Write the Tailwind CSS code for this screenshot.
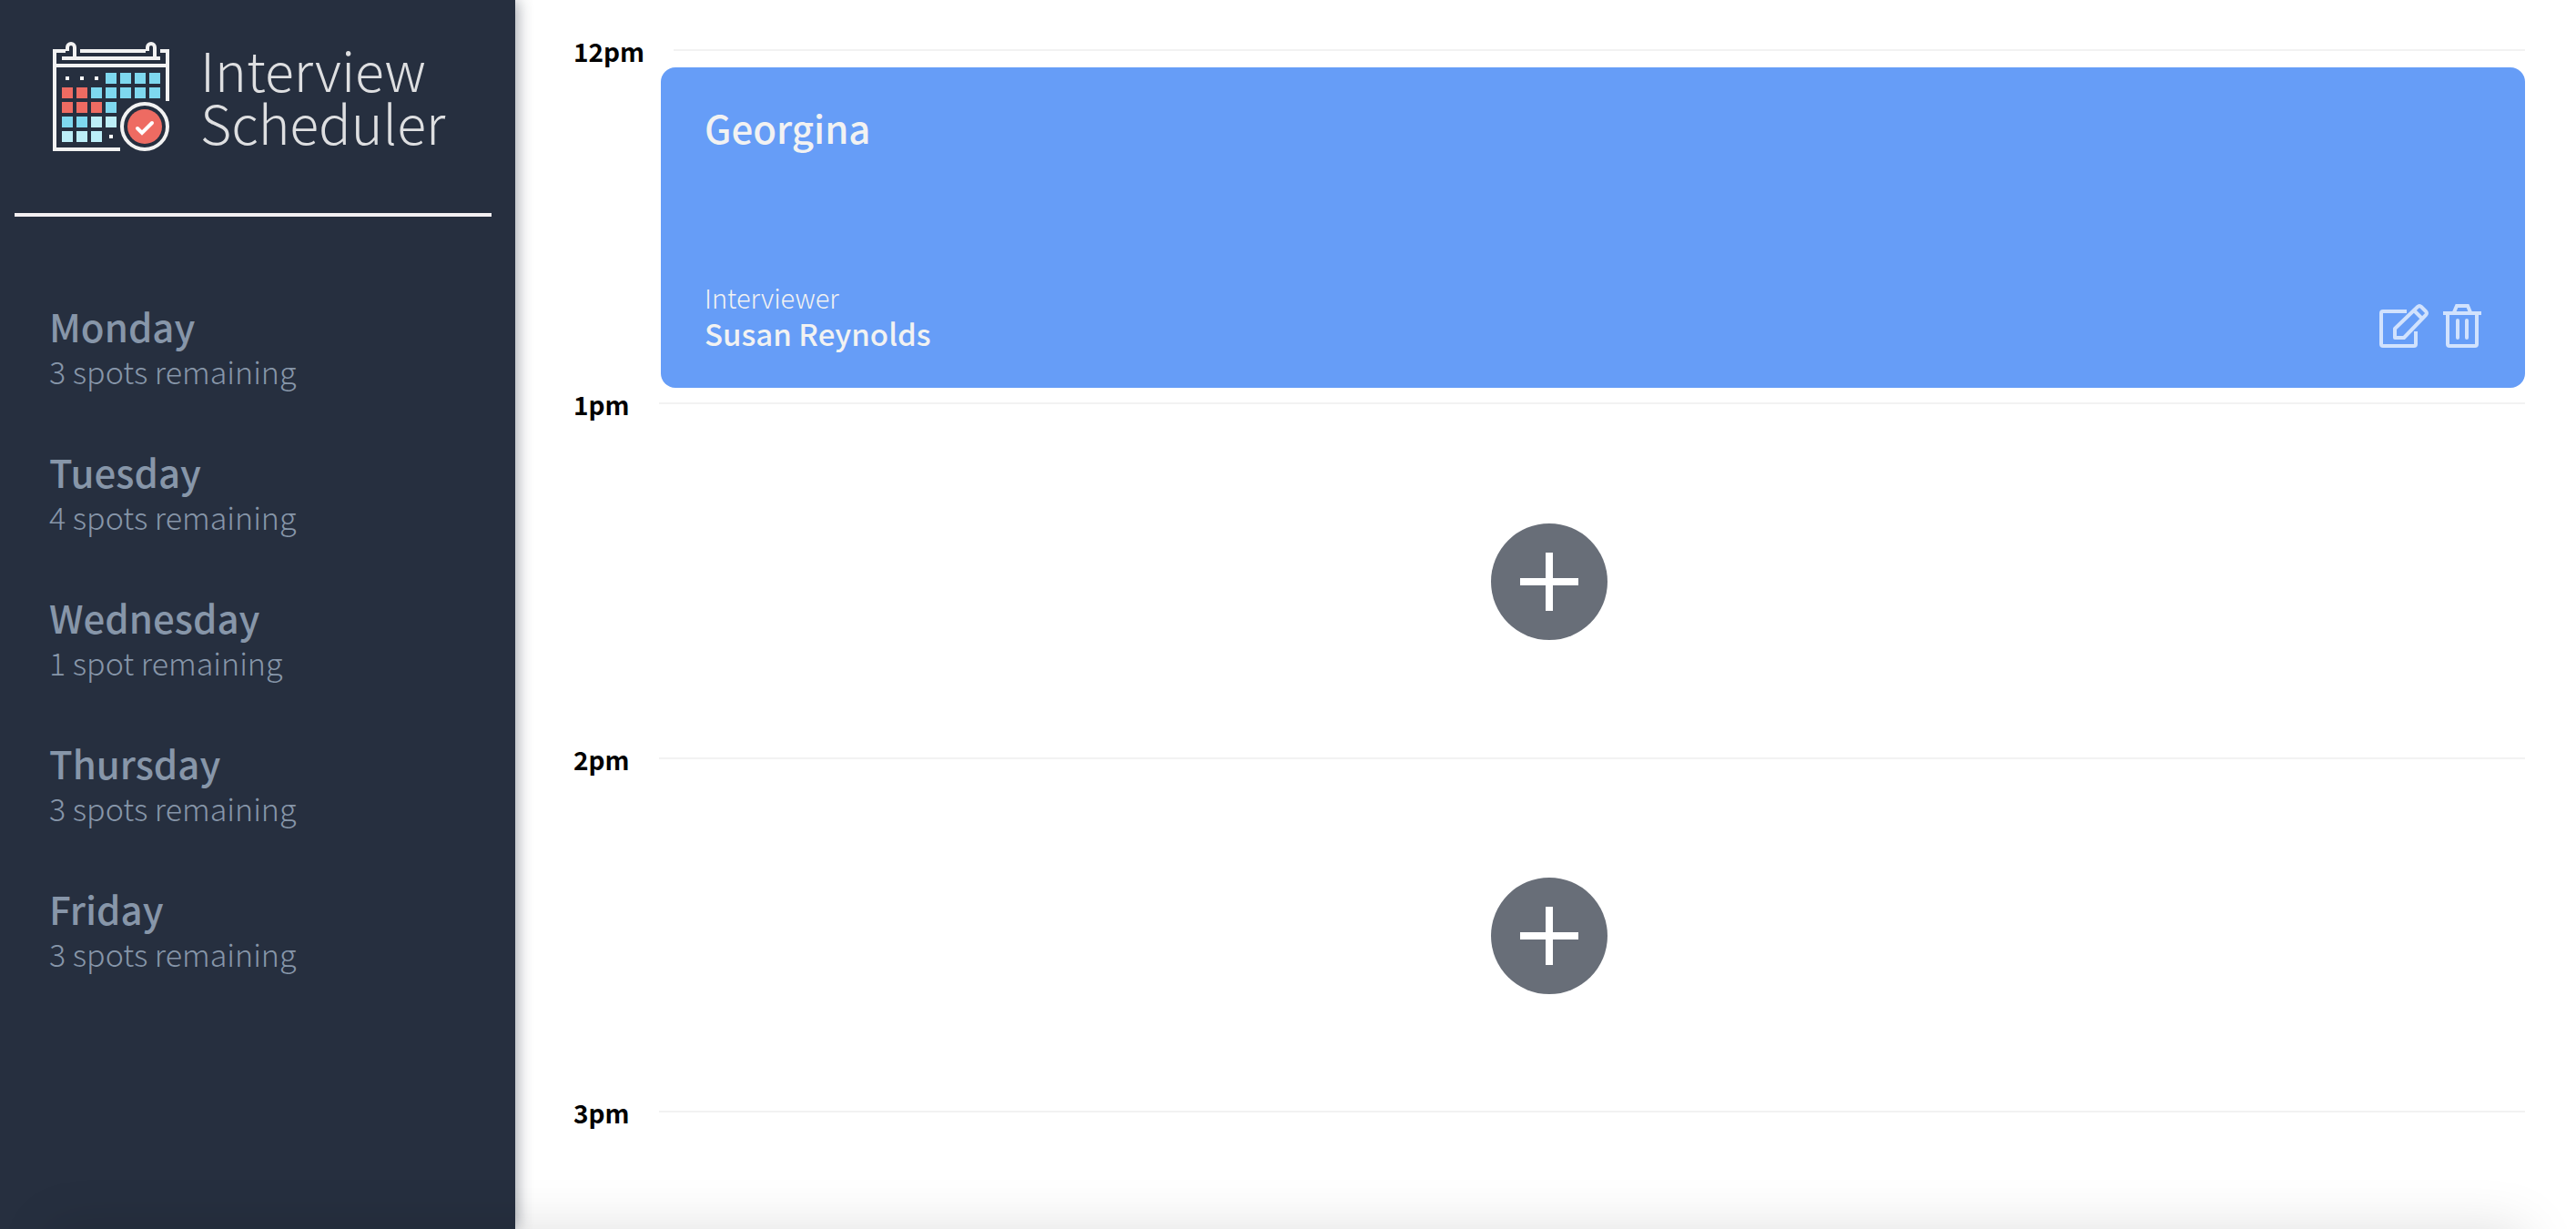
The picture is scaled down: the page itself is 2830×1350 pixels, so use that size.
<!DOCTYPE html>
<html lang="en">
<head>
<meta charset="utf-8">
<title>Interview Scheduler</title>
<script src="https://cdn.jsdelivr.net/npm/@tailwindcss/browser@4"></script>
</head>
<body class="bg-white font-['Noto_Sans_CJK_SC',sans-serif] overflow-hidden">
<div class="flex h-screen">
  <aside class="w-1/5 shrink-0 bg-[#262f3f] shadow-[2px_0_16px_rgba(38,47,63,0.45)]">
    <a href="#" class="flex items-center gap-[34px] pl-[58px] pt-[46px] text-[#dedfe1]">
      <svg class="h-[120px] w-[128px] shrink-0" viewBox="0 0 128 120" fill="none" aria-hidden="true">
        <g stroke="#f2f2f2" stroke-width="4">
          <path d="M14 10H2V118H74"/>
          <path d="M30 10H102M118 10H126V65"/>
          <path d="M10 18H118"/>
          <path d="M2 26H126"/>
          <path d="M16 10V6a4 4 0 0 1 8 0V18"/>
          <path d="M104 10V6a4 4 0 0 1 8 0V18"/>
          <circle cx="101" cy="93" r="25"/>
        </g>
        <g fill="#7ed8ef">
          <path d="M58 34h12v12h-12zM74 34h12v12h-12zM90 34h12v12h-12zM106 34h12v12h-12z"/>
          <path d="M42 50h12v12h-12zM58 50h12v12h-12zM74 50h12v12h-12zM90 50h12v12h-12zM106 50h12v12h-12z"/>
          <path d="M58 66h12v12h-12zM10 82h12v12h-12zM26 82h12v12h-12z"/>
        </g>
        <path fill="#bceef8" d="M42 82h12v12h-12zM58 82h12v12h-12zM10 98h12v12h-12zM26 98h12v12h-12zM42 98h12v12h-12z"/>
        <path fill="#ee6b62" d="M10 50h12v12h-12zM26 50h12v12h-12zM10 66h12v12h-12zM26 66h12v12h-12zM42 66h12v12h-12z"/>
        <path fill="#fff" d="M14 38h4v4h-4zM30 38h4v4h-4zM46 38h4v4h-4zM62 102h4v4h-4z"/>
        <circle cx="101" cy="93" r="19" fill="#ee6b62"/>
        <path stroke="#fff" stroke-width="4" stroke-linecap="round" d="M93 95L98 100L109 89"/>
      </svg>
      <span class="pb-0.5 text-[59px] leading-[58px] font-light">Interview<br>Scheduler</span>
    </a>
    <hr class="mt-[68px] ml-4 mr-[26px] border-t-4 border-[#f4f0f2]">
    <nav class="mt-[82px] text-[#8796a9]">
      <ul>
        <li class="h-40"><a href="#" class="block pl-[54px] pt-3"><h2 class="text-[42px] leading-[52px] font-medium">Monday</h2><p class="text-[34px] leading-12 font-light">3 spots remaining</p></a></li>
        <li class="h-40"><a href="#" class="block pl-[54px] pt-3"><h2 class="text-[42px] leading-[52px] font-medium">Tuesday</h2><p class="text-[34px] leading-12 font-light">4 spots remaining</p></a></li>
        <li class="h-40"><a href="#" class="block pl-[54px] pt-3"><h2 class="text-[42px] leading-[52px] font-medium">Wednesday</h2><p class="text-[34px] leading-12 font-light">1 spot remaining</p></a></li>
        <li class="h-40"><a href="#" class="block pl-[54px] pt-3"><h2 class="text-[42px] leading-[52px] font-medium">Thursday</h2><p class="text-[34px] leading-12 font-light">3 spots remaining</p></a></li>
        <li class="h-40"><a href="#" class="block pl-[54px] pt-3"><h2 class="text-[42px] leading-[52px] font-medium">Friday</h2><p class="text-[34px] leading-12 font-light">3 spots remaining</p></a></li>
      </ul>
    </nav>
  </aside>

  <main class="flex-1 pl-16 pr-14 pt-[38px]">
    <article>
      <header class="flex h-9 items-center">
        <h4 class="w-[110px] text-[28px] leading-9 font-bold text-black">12pm</h4>
        <hr class="mb-0.5 flex-1 border-t-2 border-[#f2f2f2]">
      </header>
      <section class="ml-24 flex h-[352px] flex-col justify-between rounded-2xl bg-[#669df7] px-12 pt-10 pb-9 text-[#f2f2f2]">
        <h2 class="text-[42px] leading-[52px] font-medium">Georgina</h2>
        <div class="flex items-end justify-between">
          <div class="pb-0.5">
            <h4 class="text-[29px] leading-9 font-light">Interviewer</h4>
            <h3 class="text-[33px] leading-11 font-medium">Susan Reynolds</h3>
          </div>
          <div class="flex gap-4 pb-2 text-[#d1e2fd]">
            <button type="button" aria-label="Edit">
              <svg class="h-12 w-[54px]" viewBox="0 0 54 48" fill="none" stroke="currentColor" stroke-width="4" stroke-linejoin="round" aria-hidden="true">
                <path d="M30 8H4Q2 8 2 10V44Q2 46 4 46H38Q40 46 40 44V30"/>
                <path d="M17 37V27L42 3Q44 1 46 3L51 8Q53 10 51 12L27 37Z"/>
                <path d="M38 7L48 17"/>
              </svg>
            </button>
            <button type="button" aria-label="Delete">
              <svg class="h-12 w-[42px]" viewBox="0 0 42 48" fill="none" stroke="currentColor" stroke-width="4" aria-hidden="true">
                <path d="M0 10H42M12 9L15 2H27L30 9"/>
                <path d="M5 10V44Q5 46 7 46H35Q37 46 37 44V10"/>
                <path d="M16 18V37M26 18V37" stroke-linecap="round"/>
              </svg>
            </button>
          </div>
        </div>
      </section>
    </article>
    <article>
      <header class="flex h-9 items-center">
        <h4 class="w-[94px] text-[28px] leading-9 font-bold text-black">1pm</h4>
        <hr class="mb-0.5 flex-1 border-t-2 border-[#f2f2f2]">
      </header>
      <section class="flex h-[354px] items-center justify-center">
        <button type="button" aria-label="Add appointment">
          <svg class="size-32" viewBox="0 0 128 128" aria-hidden="true"><circle cx="64" cy="64" r="64" fill="#686e78"/><path d="M64 32V96M32 64H96" stroke="#fff" stroke-width="8"/></svg>
        </button>
      </section>
    </article>
    <article>
      <header class="flex h-9 items-center">
        <h4 class="w-[94px] text-[28px] leading-9 font-bold text-black">2pm</h4>
        <hr class="mb-0.5 flex-1 border-t-2 border-[#f2f2f2]">
      </header>
      <section class="flex h-[352px] items-center justify-center">
        <button type="button" aria-label="Add appointment">
          <svg class="size-32" viewBox="0 0 128 128" aria-hidden="true"><circle cx="64" cy="64" r="64" fill="#686e78"/><path d="M64 32V96M32 64H96" stroke="#fff" stroke-width="8"/></svg>
        </button>
      </section>
    </article>
    <article>
      <header class="flex h-9 items-center">
        <h4 class="w-[94px] text-[28px] leading-9 font-bold text-black">3pm</h4>
        <hr class="mb-0.5 flex-1 border-t-2 border-[#f2f2f2]">
      </header>
    </article>
  </main>
</div>
<div class="pointer-events-none fixed inset-x-14 top-full h-32 shadow-[0_0_60px_rgba(0,0,0,0.13)]"></div>
</body>
</html>
